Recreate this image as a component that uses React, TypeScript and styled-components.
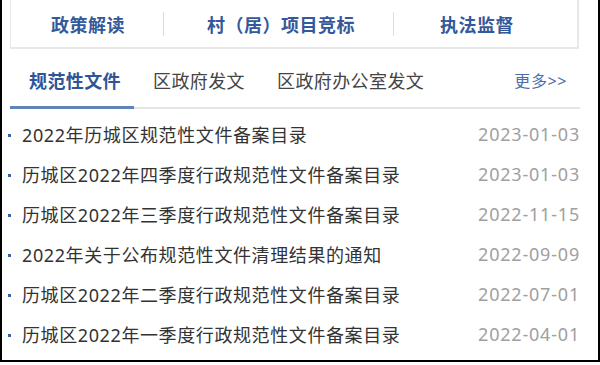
import React from 'react';
import styled, { createGlobalStyle } from 'styled-components';

const GlobalStyle = createGlobalStyle`
  html, body {
    margin: 0;
    padding: 0;
    background: #fff;
  }
  body {
    font-family: "Noto Sans", "Noto Sans CJK SC", sans-serif;
  }
`;

const Frame = styled.div`
  box-sizing: border-box;
  width: 600px;
  height: 362px;
  border: 2px solid #000;
  border-top: none;
  padding: 0 18px 0 6px;
  overflow: hidden;
`;

const QuickNav = styled.nav`
  display: flex;
  align-items: center;
  height: 47px;
  margin-left: 2px;
  margin-right: 1px;
  border: 2px solid #e8e8e8;
  border-top: none;
  border-left-width: 1px;
`;

const QuickItem = styled.a<{ $first?: boolean; $grow?: boolean }>`
  display: flex;
  align-items: center;
  justify-content: ${({ $grow }) => ($grow ? 'flex-start' : 'center')};
  height: 24px;
  padding: 0 ${({ $grow }) => ($grow ? '0' : '38px')} 0 ${({ $first }) => ($first ? '40px' : '43px')};
  ${({ $grow }) => ($grow ? 'flex: 1; padding-left: 46px;' : '')}
  border-left: ${({ $first }) => ($first ? 'none' : '1px solid #dcdcdc')};
  font-size: 18px;
  font-weight: 700;
  letter-spacing: 0.5px;
  color: #34589a;
  text-decoration: none;
  white-space: nowrap;
`;

const TabBar = styled.div`
  display: flex;
  align-items: flex-end;
  height: 58px;
  margin-left: 2px;
  border-bottom: 2px solid #e5e5e5;
`;

const Tab = styled.a<{ $active?: boolean }>`
  position: relative;
  padding: 0 13px 14px 19px;
  font-size: 18px;
  letter-spacing: 0.4px;
  line-height: 24px;
  font-weight: ${({ $active }) => ($active ? 700 : 400)};
  color: ${({ $active }) => ($active ? '#2f5597' : '#444')};
  white-space: nowrap;
  &::after {
    content: '';
    display: ${({ $active }) => ($active ? 'block' : 'none')};
    position: absolute;
    left: 0;
    right: 0;
    bottom: -2px;
    height: 3px;
    background: #6283b9;
  }
`;

const More = styled.a`
  margin-left: auto;
  padding: 0 13px 16px 0;
  font-size: 16px;
  line-height: 20px;
  letter-spacing: 0.6px;
  color: #4a6ea8;
  white-space: nowrap;
`;

const List = styled.ul`
  list-style: none;
  margin: 0;
  padding: 5px 0 0;
`;

const Row = styled.li`
  display: flex;
  align-items: center;
  height: 40px;
`;

const Bullet = styled.span`
  width: 3px;
  height: 3px;
  margin: 2px 11px 0 0;
  background: #3a62a6;
  flex: none;
`;

const Title = styled.a`
  flex: 1;
  font-size: 18px;
  letter-spacing: 0.6px;
  color: #333;
  white-space: nowrap;
  overflow: hidden;
`;

const DateText = styled.span`
  font-size: 18px;
  letter-spacing: 0.8px;
  color: #a0a0a0;
  white-space: nowrap;
`;

const items = [
  { title: '2022年历城区规范性文件备案目录', date: '2023-01-03' },
  { title: '历城区2022年四季度行政规范性文件备案目录', date: '2023-01-03' },
  { title: '历城区2022年三季度行政规范性文件备案目录', date: '2022-11-15' },
  { title: '2022年关于公布规范性文件清理结果的通知', date: '2022-09-09' },
  { title: '历城区2022年二季度行政规范性文件备案目录', date: '2022-07-01' },
  { title: '历城区2022年一季度行政规范性文件备案目录', date: '2022-04-01' },
];

const App: React.FC = () => (
  <>
    <GlobalStyle />
    <Frame>
      <QuickNav>
        <QuickItem $first>政策解读</QuickItem>
        <QuickItem>村（居）项目竞标</QuickItem>
        <QuickItem $grow>执法监督</QuickItem>
      </QuickNav>
      <TabBar>
        <Tab $active>规范性文件</Tab>
        <Tab>区政府发文</Tab>
        <Tab>区政府办公室发文</Tab>
        <More>更多&gt;&gt;</More>
      </TabBar>
      <List>
        {items.map((it, i) => (
          <Row key={i}>
            <Bullet />
            <Title>{it.title}</Title>
            <DateText>{it.date}</DateText>
          </Row>
        ))}
      </List>
    </Frame>
  </>
);

export default App;
